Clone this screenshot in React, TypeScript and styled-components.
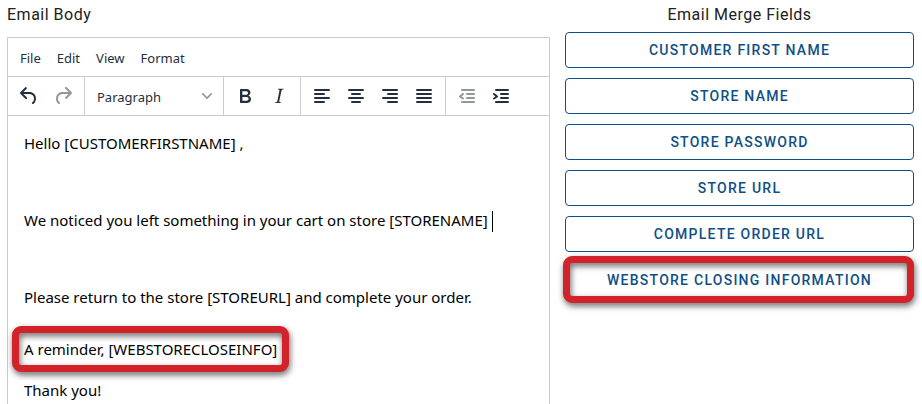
import React from 'react';
import styled, { createGlobalStyle, css } from 'styled-components';

const GlobalStyle = createGlobalStyle`
  *, *::before, *::after { box-sizing: border-box; }
  body { margin: 0; background: #fff; }
`;

const line = '#cccccc';
const ink = '#222f3e';
const blue = '#0f4f85';
const uiFont = '"Noto Sans", "Open Sans", sans-serif';

const marker = css`
  content: '';
  position: absolute;
  border: 7px solid #d2232a;
  border-radius: 9px;
  filter: drop-shadow(1px 3px 3px rgba(0, 0, 0, 0.6));
  pointer-events: none;
`;

const Page = styled.main`
  display: grid;
  grid-template-columns: minmax(0, 543fr) minmax(0, 349fr);
  column-gap: 15px;
  min-height: 100vh;
  padding: 0 8px 0 7px;
`;

const Column = styled.section`
  display: flex;
  flex-direction: column;
`;

const Title = styled.h2<{ $centered?: boolean }>`
  margin: 0;
  padding-top: 5px;
  font: 400 16px/20px Roboto, sans-serif;
  letter-spacing: 0.5px;
  color: #212121;
  text-align: ${(p) => (p.$centered ? 'center' : 'left')};
`;

const Editor = styled.div`
  display: flex;
  flex: 1;
  flex-direction: column;
  margin-top: 12px;
  border: 1px solid ${line};
  border-bottom: 0;
`;

const MenuBar = styled.div`
  display: flex;
  align-items: center;
  height: 39px;
  padding: 2px 4px 0;
  border-bottom: 1px solid ${line};
`;

const MenuButton = styled.button`
  padding: 0 8px;
  border: 0;
  background: none;
  font: 400 13px/24px ${uiFont};
  color: ${ink};
`;

const Toolbar = styled.div`
  display: flex;
  height: 39px;
  border-bottom: 1px solid ${line};
`;

const Group = styled.div`
  display: flex;
  align-items: center;
  padding: 0 4px;
  border-right: 1px solid ${line};

  &:last-child { border-right: 0; }
`;

const ToolButton = styled.button`
  display: grid;
  place-items: center;
  width: 34px;
  height: 34px;
  padding: 0;
  border: 0;
  background: none;
  color: ${ink};

  &:disabled { color: rgba(34, 47, 62, 0.5); }
`;

const FormatPicker = styled.label`
  display: grid;
  grid-template-columns: 1fr 10px;
  align-items: center;
  width: 130px;
  padding-right: 7px;

  select {
    grid-area: 1 / 1 / 2 / 3;
    height: 34px;
    padding: 2px 8px 0;
    border: 0;
    appearance: none;
    background: none;
    font: 400 13px ${uiFont};
    color: ${ink};
  }

  svg {
    grid-area: 1 / 2;
    color: rgba(34, 47, 62, 0.5);
    pointer-events: none;
  }
`;

const Message = styled.div`
  flex: 1;
  padding: 16px 16px 0;
  outline: 0;
  font: 400 15px/22px ${uiFont};
  color: #000;
  white-space: nowrap;

  p { margin: 0 0 16px; }
  p:last-child { margin: 0; }
`;

const Blank = styled.p`
  height: 23px;
`;

const Reminder = styled.p`
  && { margin: 30px 0 19px; }

  span { position: relative; }
  span::after { ${marker} inset: -13px -12px -13px -12px; }
`;

const Caret = styled.span`
  display: inline-block;
  width: 1px;
  height: 21px;
  margin: -3px 0;
  background: #000;
  vertical-align: middle;
`;

const FieldList = styled.div`
  display: grid;
  gap: 10px;
  margin-top: 7px;
`;

const FieldButton = styled.button<{ $marked?: boolean }>`
  position: relative;
  height: 36px;
  padding: 0 16px;
  border: 1px solid ${blue};
  border-radius: 4px;
  background: #fff;
  font: 500 14px/20px Roboto, sans-serif;
  letter-spacing: 1.25px;
  text-transform: uppercase;
  color: ${blue};

  ${(p) => p.$marked && css`&::after { ${marker} inset: -7px -1px -6px -3px; }`}
`;

const paths = {
  undo: 'M6.4 8H12c3.7 0 6.2 2 6.8 5.1.6 2.7-.4 5.6-2.3 6.8a1 1 0 0 1-1-1.8c1.1-.6 1.8-2.7 1.4-4.6-.5-2.1-2.1-3.5-4.9-3.5H6.4l3.3 3.3a1 1 0 1 1-1.4 1.4l-5-5a1 1 0 0 1 0-1.4l5-5a1 1 0 0 1 1.4 1.4L6.4 8z',
  redo: 'M17.6 10H12c-2.8 0-4.4 1.4-4.9 3.5-.4 2 .3 4 1.4 4.6a1 1 0 1 1-1 1.8c-2-1.2-2.9-4.1-2.3-6.8.6-3 3-5.1 6.8-5.1h5.6l-3.3-3.3a1 1 0 1 1 1.4-1.4l5 5a1 1 0 0 1 0 1.4l-5 5a1 1 0 0 1-1.4-1.4l3.3-3.3z',
  bold: 'M7.8 19c-.3 0-.5 0-.6-.2l-.2-.5V5.7c0-.2 0-.4.2-.5l.6-.2h5c1.5 0 2.7.3 3.5 1 .7.6 1.1 1.4 1.1 2.5a3 3 0 0 1-.6 1.9c-.4.6-1 1-1.6 1.2.4.1.9.3 1.3.6s.8.7 1 1.2c.4.4.5 1 .5 1.6 0 1.3-.4 2.3-1.3 3-.8.7-2.1 1-3.8 1H7.8zm5-8.3c.6 0 1.2-.1 1.6-.5.4-.3.6-.7.6-1.3 0-1.1-.8-1.7-2.3-1.7H9.3v3.5h3.4zm.5 6c.7 0 1.3-.1 1.7-.4.4-.4.6-.9.6-1.5s-.2-1-.7-1.4c-.4-.3-1-.4-2-.4H9.4v3.8h4z',
  italic: 'M16.7 4.7l-.1.9h-.3c-.6 0-1 0-1.4.3-.3.3-.4.6-.5 1.1l-2.1 9.8v.6c0 .5.4.8 1.4.8h.2l-.2.8H8l.2-.8h.2c1.1 0 1.8-.5 2-1.5l2-9.8.1-.5c0-.6-.4-.8-1.4-.8h-.3l.2-.9h5.8z',
};

const bars = {
  left: 'M5 6h14M5 10h9M5 14h14M5 18h9',
  center: 'M5 6h14M8 10h8M5 14h14M8 18h8',
  right: 'M5 6h14M10 10h9M5 14h14M10 18h9',
  justify: 'M5 6h14M5 10h14M5 14h14M5 18h14',
  outdent: 'M7 6h12M12 10h7M12 14h7M7 18h12M8 10l-3 2.5 3 2',
  indent: 'M7 6h12M12 10h7M12 14h7M7 18h12M5 10l3 2.5-3 2',
};

const Glyph = ({ name }: { name: keyof typeof paths }) => (
  <svg width="24" height="24" viewBox="0 0 24 24" fill="currentColor" fillRule="evenodd" aria-hidden="true">
    <path d={paths[name]} />
  </svg>
);

const Bars = ({ name }: { name: keyof typeof bars }) => (
  <svg width="24" height="24" viewBox="0 0 24 24" fill="none" stroke="currentColor" strokeWidth="2" strokeLinecap="round" strokeLinejoin="round" aria-hidden="true">
    <path d={bars[name]} />
  </svg>
);

const mergeFields = [
  'Customer First Name',
  'Store Name',
  'Store Password',
  'Store URL',
  'Complete Order URL',
  'Webstore Closing Information',
];

export default function App() {
  return (
    <>
      <GlobalStyle />
      <Page>
        <Column>
          <Title id="body-title">Email Body</Title>
          <Editor>
            <MenuBar>
              {['File', 'Edit', 'View', 'Format'].map((m) => (
                <MenuButton key={m} type="button">{m}</MenuButton>
              ))}
            </MenuBar>
            <Toolbar role="toolbar" aria-label="Formatting">
              <Group>
                <ToolButton type="button" aria-label="Undo"><Glyph name="undo" /></ToolButton>
                <ToolButton type="button" aria-label="Redo" disabled><Glyph name="redo" /></ToolButton>
              </Group>
              <Group>
                <FormatPicker>
                  <select aria-label="Block format" defaultValue="Paragraph">
                    <option>Paragraph</option>
                  </select>
                  <svg width="10" height="10" viewBox="0 0 10 10" fill="currentColor" aria-hidden="true">
                    <path d="M8.7 2.2c.3-.3.8-.3 1 0 .4.4.4.9 0 1.2L5.7 7.8c-.3.3-.9.3-1.2 0L.2 3.4a.8.8 0 0 1 0-1.2c.3-.3.8-.3 1.1 0L5 6l3.7-3.8z" />
                  </svg>
                </FormatPicker>
              </Group>
              <Group>
                <ToolButton type="button" aria-label="Bold"><Glyph name="bold" /></ToolButton>
                <ToolButton type="button" aria-label="Italic"><Glyph name="italic" /></ToolButton>
              </Group>
              <Group>
                <ToolButton type="button" aria-label="Align left"><Bars name="left" /></ToolButton>
                <ToolButton type="button" aria-label="Align center"><Bars name="center" /></ToolButton>
                <ToolButton type="button" aria-label="Align right"><Bars name="right" /></ToolButton>
                <ToolButton type="button" aria-label="Justify"><Bars name="justify" /></ToolButton>
              </Group>
              <Group>
                <ToolButton type="button" aria-label="Decrease indent" disabled><Bars name="outdent" /></ToolButton>
                <ToolButton type="button" aria-label="Increase indent"><Bars name="indent" /></ToolButton>
              </Group>
            </Toolbar>
            <Message
              contentEditable
              suppressContentEditableWarning
              role="textbox"
              aria-multiline="true"
              aria-labelledby="body-title"
              spellCheck={false}
            >
              <p>Hello [CUSTOMERFIRSTNAME] ,</p>
              <Blank />
              <p>We noticed you left something in your cart on store [STORENAME] <Caret /></p>
              <Blank />
              <p>Please return to the store [STOREURL] and complete your order.</p>
              <Reminder><span>A reminder, [WEBSTORECLOSEINFO]</span></Reminder>
              <p>Thank you!</p>
            </Message>
          </Editor>
        </Column>
        <Column>
          <Title $centered>Email Merge Fields</Title>
          <FieldList>
            {mergeFields.map((f, i) => (
              <FieldButton key={f} type="button" $marked={i === mergeFields.length - 1}>{f}</FieldButton>
            ))}
          </FieldList>
        </Column>
      </Page>
    </>
  );
}
